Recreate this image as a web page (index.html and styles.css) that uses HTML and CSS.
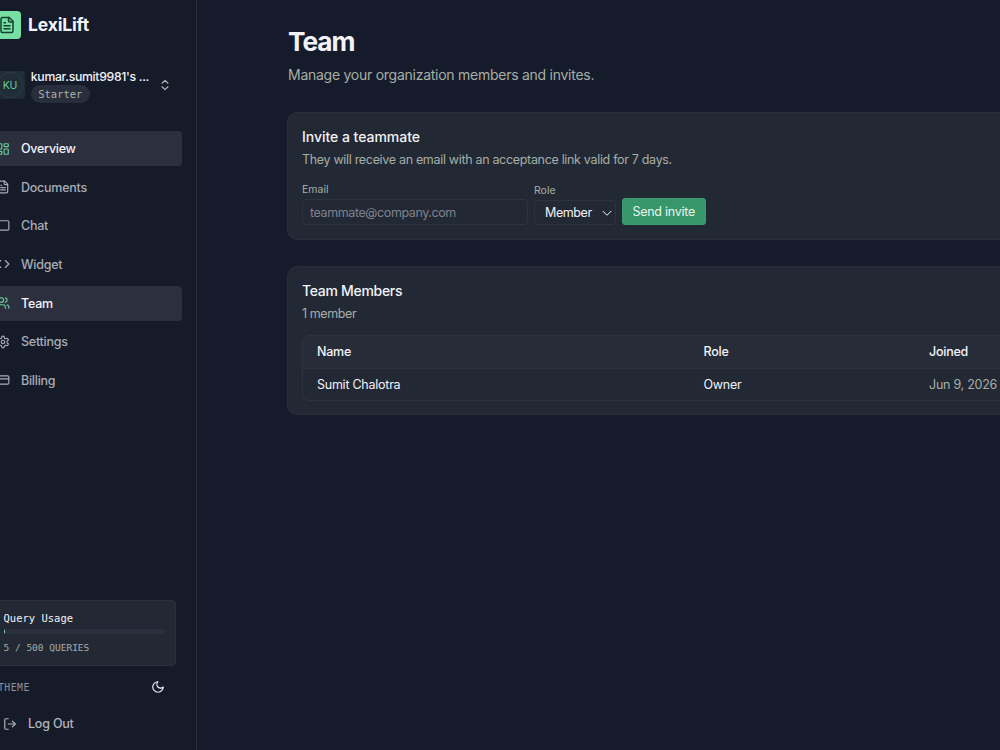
FILE: index.html
```
<!DOCTYPE html>
<html lang="en">
  <head>
    <meta charset="utf-8" />
    <title>Team - LexiLift</title>
    <link rel="stylesheet" href="styles.css">
  </head>
  <body>
    <div class="layout">
      <aside class="sidebar">
        <div class="brand">
          <span class="brand-icon">
            <svg class="icon" viewBox="0 0 24 24"><path d="M15 2H6a2 2 0 0 0-2 2v16a2 2 0 0 0 2 2h12a2 2 0 0 0 2-2V7Z"/><path d="M14 2v4a2 2 0 0 0 2 2h4"/><path d="M10 9H8M16 13H8M16 17H8"/></svg>
          </span>
          <span class="brand-name">LexiLift</span>
        </div>

        <div class="org">
          <div class="org-avatar"><span>KU</span></div>
          <div class="org-info">
            <div class="org-name">kumar.sumit9981's ...</div>
            <span class="org-plan">Starter</span>
          </div>
          <svg class="icon org-toggle" viewBox="0 0 24 24"><path d="m7 15 5 5 5-5"/><path d="m7 9 5-5 5 5"/></svg>
        </div>

        <nav class="nav">
          <a class="nav-item active">
            <svg class="icon" viewBox="0 0 24 24"><rect width="7" height="9" x="3" y="3" rx="1"/><rect width="7" height="5" x="14" y="3" rx="1"/><rect width="7" height="9" x="14" y="12" rx="1"/><rect width="7" height="5" x="3" y="16" rx="1"/></svg>
            <span>Overview</span>
          </a>
          <a class="nav-item">
            <svg class="icon" viewBox="0 0 24 24"><path d="M15 2H6a2 2 0 0 0-2 2v16a2 2 0 0 0 2 2h12a2 2 0 0 0 2-2V7Z"/><path d="M14 2v4a2 2 0 0 0 2 2h4"/><path d="M10 9H8M16 13H8M16 17H8"/></svg>
            <span>Documents</span>
          </a>
          <a class="nav-item">
            <svg class="icon" viewBox="0 0 24 24"><path d="M22 17a2 2 0 0 1-2 2H6l-4 3V5a2 2 0 0 1 2-2h16a2 2 0 0 1 2 2z"/></svg>
            <span>Chat</span>
          </a>
          <a class="nav-item">
            <svg class="icon" viewBox="0 0 24 24"><path d="m16 18 6-6-6-6"/><path d="m8 6-6 6 6 6"/></svg>
            <span>Widget</span>
          </a>
          <a class="nav-item active">
            <svg class="icon" viewBox="0 0 24 24"><path d="M16 21v-2a4 4 0 0 0-4-4H6a4 4 0 0 0-4 4v2"/><circle cx="9" cy="7" r="4"/><path d="M22 21v-2a4 4 0 0 0-3-3.87"/><path d="M16 3.13a4 4 0 0 1 0 7.75"/></svg>
            <span>Team</span>
          </a>
          <a class="nav-item">
            <svg class="icon" viewBox="0 0 24 24"><path d="M12.22 2h-.44a2 2 0 0 0-2 2v.18a2 2 0 0 1-1 1.73l-.43.25a2 2 0 0 1-2 0l-.15-.08a2 2 0 0 0-2.73.73l-.22.38a2 2 0 0 0 .73 2.73l.15.1a2 2 0 0 1 1 1.72v.51a2 2 0 0 1-1 1.74l-.15.09a2 2 0 0 0-.73 2.73l.22.38a2 2 0 0 0 2.73.73l.15-.08a2 2 0 0 1 2 0l.43.25a2 2 0 0 1 1 1.73V20a2 2 0 0 0 2 2h.44a2 2 0 0 0 2-2v-.18a2 2 0 0 1 1-1.73l.43-.25a2 2 0 0 1 2 0l.15.08a2 2 0 0 0 2.73-.73l.22-.39a2 2 0 0 0-.73-2.73l-.15-.08a2 2 0 0 1-1-1.74v-.5a2 2 0 0 1 1-1.74l.15-.09a2 2 0 0 0 .73-2.73l-.22-.38a2 2 0 0 0-2.73-.73l-.15.08a2 2 0 0 1-2 0l-.43-.25a2 2 0 0 1-1-1.73V4a2 2 0 0 0-2-2z"/><circle cx="12" cy="12" r="3"/></svg>
            <span>Settings</span>
          </a>
          <a class="nav-item">
            <svg class="icon" viewBox="0 0 24 24"><rect width="20" height="14" x="2" y="5" rx="2"/><path d="M2 10h20"/></svg>
            <span>Billing</span>
          </a>
        </nav>

        <div class="sidebar-footer">
          <div class="usage">
            <div class="usage-title">Query Usage</div>
            <div class="usage-bar"><div class="usage-fill" style="width: 1%"></div></div>
            <div class="usage-count">5 / 500 QUERIES</div>
          </div>
          <div class="theme-row">
            <span class="theme-label">THEME</span>
            <svg class="icon" viewBox="0 0 24 24"><path d="M12 3a6 6 0 0 0 9 9 9 9 0 1 1-9-9Z"/></svg>
          </div>
          <a class="logout">
            <svg class="icon" viewBox="0 0 24 24"><path d="M9 21H5a2 2 0 0 1-2-2V5a2 2 0 0 1 2-2h4"/><path d="m16 17 5-5-5-5"/><path d="M21 12H9"/></svg>
            <span>Log Out</span>
          </a>
        </div>
      </aside>

      <main class="main">
        <h1>Team</h1>
        <p class="subtitle">Manage your organization members and invites.</p>

        <section class="card invite-card">
          <h2>Invite a teammate</h2>
          <p class="card-text">They will receive an email with an acceptance link valid for 7 days.</p>
          <form class="invite-form">
            <div class="field">
              <label for="email">Email</label>
              <input id="email" class="email-input" type="email" placeholder="teammate@company.com">
            </div>
            <div class="field">
              <label for="role">Role</label>
              <div id="role" class="role-select">
                <span>Member</span>
                <svg class="icon" viewBox="0 0 24 24"><path d="m4 8.5 8 8 8-8"/></svg>
              </div>
            </div>
            <button type="button" class="send-button">Send invite</button>
          </form>
        </section>

        <section class="card members-card">
          <h2 class="members-title">Team Members</h2>
          <p class="card-text member-count">1 member</p>
          <div class="table">
            <div class="row head">
              <span>Name</span>
              <span>Role</span>
              <span>Joined</span>
            </div>
            <div class="row">
              <span>Sumit Chalotra</span>
              <span>Owner</span>
              <span class="date">Jun 9, 2026</span>
            </div>
          </div>
        </section>
      </main>
    </div>
  </body>
</html>
```

FILE: styles.css
```
* {
  box-sizing: border-box;
}
html {
  overflow: hidden;
}
body {
  margin: 0;
  height: 750px;
  overflow: hidden;
  background: #151b2a;
  color: #f2f3f8;
  font-family: Inter, "Liberation Sans", sans-serif;
  font-size: 12.5px;
  letter-spacing: -0.2px;
}
h1, h2, p {
  margin: 0;
}
.icon {
  width: 14px;
  height: 14px;
  flex: none;
  fill: none;
  stroke: currentColor;
  stroke-width: 2;
  stroke-linecap: round;
  stroke-linejoin: round;
}
.layout {
  display: flex;
  width: 1028px;
  height: 750px;
  margin-left: -28px;
}

/* Sidebar */
.sidebar {
  display: flex;
  flex-direction: column;
  width: 225px;
  flex: none;
  background: #161b2a;
  border-right: 1px solid #282d3b;
}
.brand {
  display: flex;
  align-items: center;
  gap: 7px;
  padding: 11px 0 0 21px;
}
.brand-icon {
  display: flex;
  align-items: center;
  justify-content: center;
  width: 28px;
  height: 28px;
  border-radius: 4px;
  background: #77dfa4;
  color: #14402c;
}
.brand-icon .icon {
  width: 18px;
  height: 18px;
}
.brand-name {
  font-size: 17.5px;
  font-weight: 700;
  line-height: 28px;
  letter-spacing: -0.15px;
}
.org {
  display: flex;
  align-items: center;
  margin: 29px 24.5px 0 25px;
  height: 34px;
}
.org-avatar {
  display: flex;
  width: 28px;
  height: 28px;
  padding: 1px 1px 1px 0;
  border-radius: 4px;
  background: #202c37;
  color: #6bcd98;
  font-size: 10.5px;
}
.org-avatar span {
  display: flex;
  align-items: center;
  justify-content: center;
  width: 26px;
  height: 26px;
  border: 1px solid #2b3b45;
  border-radius: 50%;
}
.org-info {
  width: 127.5px;
  margin-left: 6px;
  padding-top: 1px;
}
.org-name {
  font-size: 12.25px;
  font-weight: 500;
  line-height: 16px;
  letter-spacing: -0.32px;
  white-space: nowrap;
}
.org-plan {
  display: block;
  width: 59px;
  height: 18px;
  border-radius: 9px;
  background: #292e3c;
  color: #aab3ab;
  font: 10.5px/18px "DejaVu Sans Mono", monospace;
  letter-spacing: 0;
  text-align: center;
}
.org-toggle {
  color: #b4bab8;
}
.nav {
  display: flex;
  flex-direction: column;
  gap: 3.67px;
  padding: 0 14px;
  margin-top: 29px;
}
.nav-item {
  display: flex;
  align-items: center;
  gap: 11px;
  height: 35px;
  padding-left: 10px;
  border-radius: 4px;
  color: #a9acb5;
  font-weight: 500;
  letter-spacing: -0.25px;
}
.nav-item.active {
  background: #2c303e;
  color: #f2f3f8;
}
.nav-item.active .icon {
  color: #69cd96;
}
.sidebar-footer {
  margin: auto 20px 0 21px;
}
.usage {
  height: 66px;
  padding: 10px 10px 0 9.5px;
  border: 1px solid #292f3b;
  border-radius: 4px;
  background: #222834;
  font-family: "DejaVu Sans Mono", monospace;
  letter-spacing: 0;
}
.usage-title {
  font-size: 10.5px;
  line-height: 14px;
}
.usage-bar {
  height: 5px;
  margin-top: 4px;
  overflow: hidden;
  border-radius: 2px;
  background: #2a2f3e;
}
.usage-fill {
  height: 5px;
  background: #77dfa4;
}
.usage-count {
  margin-top: 7px;
  color: #a6afa7;
  font-size: 9.5px;
  line-height: 14px;
}
.theme-row {
  display: flex;
  align-items: center;
  justify-content: space-between;
  height: 42px;
  padding: 0 11.5px 0 5px;
}
.theme-label {
  color: #8c909a;
  font: 9.75px "DejaVu Sans Mono", monospace;
  letter-spacing: 0.5px;
}
.logout {
  display: flex;
  align-items: center;
  gap: 11px;
  height: 31px;
  margin-bottom: 11px;
  padding-left: 10px;
  color: #b1b4bd;
  font-weight: 500;
}

/* Main */
.main {
  flex: 1;
  min-width: 0;
  padding: 26px 0 0 91px;
}
h1 {
  font-size: 26.25px;
  font-weight: 700;
  line-height: 31px;
  letter-spacing: -1px;
}
.subtitle {
  margin-top: 7px;
  color: #a6afa7;
  font-size: 14px;
  line-height: 21px;
  letter-spacing: -0.26px;
}
.card {
  margin-left: -1px;
  padding: 14px;
  border: 1px solid #282e3a;
  border-right: none;
  border-radius: 10px 0 0 10px;
  background: #222834;
}
.card h2 {
  font-size: 14px;
  font-weight: 500;
  line-height: 20px;
  letter-spacing: -0.03px;
}
.card .members-title {
  letter-spacing: -0.3px;
}
.card-text {
  margin-top: 4px;
  color: #a6afa7;
  line-height: 18px;
  letter-spacing: -0.32px;
}
.invite-card {
  height: 128px;
  margin-top: 27px;
}
.invite-form {
  display: flex;
  align-items: flex-end;
  gap: 6px;
  margin-top: 14px;
}
.field {
  display: flex;
  flex-direction: column;
}
.field label {
  color: #a6afa7;
  font-size: 10.5px;
  line-height: 14px;
  margin-bottom: 2px;
  letter-spacing: 0;
}
.email-input {
  width: 226px;
  height: 26px;
  padding: 0 7px;
  border: 1px solid #2d333f;
  border-radius: 4px;
  background: transparent;
  font: 12.5px Inter, sans-serif;
  letter-spacing: -0.4px;
}
.email-input::placeholder {
  color: #7e838d;
}
.role-select {
  display: flex;
  align-items: center;
  justify-content: space-between;
  width: 82px;
  height: 25px;
  padding: 0 2px 0 10px;
  border: 1px solid #2d333f;
  border-radius: 4px;
}
.role-select span {
  letter-spacing: -0.4px;
}
.role-select .icon {
  width: 12px;
  height: 12px;
}
.send-button {
  width: 83.5px;
  height: 27px;
  padding: 0;
  border: 1px solid #3b9d6d;
  border-radius: 3px;
  background: #38976a;
  color: #eaf5ef;
  font: 12.5px Inter, sans-serif;
  letter-spacing: -0.25px;
}
.members-card {
  height: 149px;
  margin-top: 26px;
}
.member-count {
  letter-spacing: -0.4px;
}
.table {
  margin-top: 12px;
  margin-right: -14px;
  overflow: hidden;
  border: 1px solid #2d333f;
  border-right: none;
  border-radius: 7px 0 0 7px;
}
.row {
  display: grid;
  grid-template-columns: 386.5px 225.5px 1fr;
  padding-left: 14px;
  height: 31px;
  line-height: 31px;
  letter-spacing: -0.25px;
  white-space: nowrap;
}
.row.head {
  height: 33px;
  line-height: 32px;
  border-bottom: 1px solid #2d333f;
  background: #272c39;
  font-weight: 500;
}
.date {
  color: #a6afa7;
}
```
